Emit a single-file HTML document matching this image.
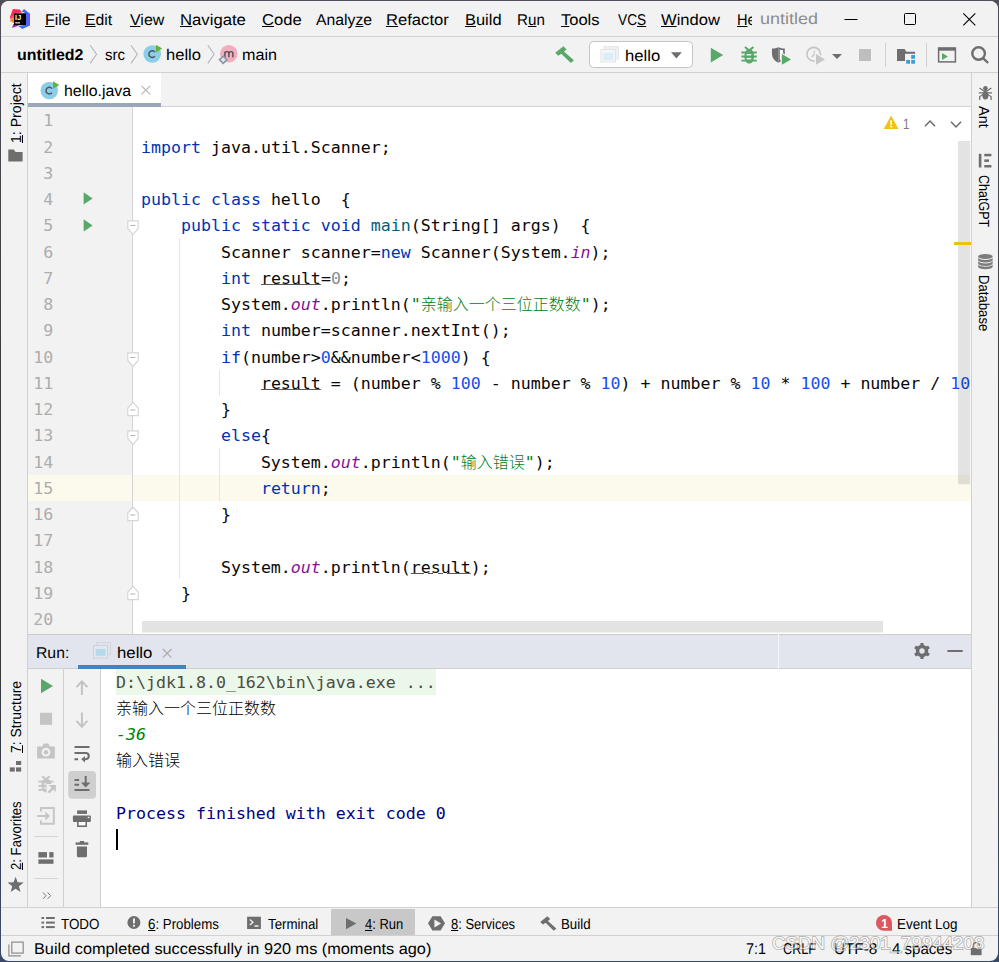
<!DOCTYPE html>
<html lang="zh">
<head>
<meta charset="utf-8">
<title>untitled2 - hello.java</title>
<style>
html,body{margin:0;padding:0;}
body{width:999px;height:962px;overflow:hidden;background:linear-gradient(#4f4e59 0,#4a4a52 12%,#38383c 45%,#38383c 70%,#3a4a66 97%);font-family:"Liberation Sans","Noto Sans CJK SC",sans-serif;color:#000;}
#win{position:absolute;left:1px;top:1px;width:997px;height:960px;border-radius:8px;overflow:hidden;background:#f2f2f2;}
#page{position:absolute;left:-1px;top:-1px;width:999px;height:962px;}
.a{position:absolute;}
.t{position:absolute;white-space:nowrap;line-height:20px;height:20px;transform-origin:0 0;text-rendering:geometricPrecision;}
.vt{transform-origin:0 0;}
.hl{position:absolute;background:#d1d1d1;height:1px;}
.vl{position:absolute;background:#d1d1d1;width:1px;}
u{text-decoration:underline;text-underline-offset:1px;text-decoration-thickness:1px;}
.code{font-family:"DejaVu Sans Mono","Liberation Mono","Noto Sans CJK SC",monospace;font-size:16.6px;white-space:pre;}
.ln{position:absolute;left:28px;width:25.3px;text-align:right;color:#adadad;height:26.25px;line-height:26.25px;}
.cl{position:absolute;left:141px;height:26.25px;line-height:26.25px;color:#080808;}
.k{color:#0033b3;}
.n{color:#1750eb;}
.s{color:#067d17;}
.f{color:#871094;font-style:italic;}
.m{color:#00627a;}
.g{color:#8c8c8c;}
.cj{font-size:16px;font-family:"Noto Sans CJK SC",sans-serif;line-height:0;font-weight:300;}
.ru{text-decoration:underline;text-underline-offset:0px;text-decoration-thickness:1px;text-decoration-color:#5a5a5a;}
.con{position:absolute;left:116px;height:26.25px;line-height:26.25px;}
svg.ov{position:absolute;left:0;top:0;pointer-events:none;}
</style>
</head>
<body>
<div id="win"><div id="page">
<div class="a" style="left:0;top:0;width:999px;height:36px;background:#f2f2f2;"></div>
<div class="t " style="left:44.69px;top:11.00px;transform:scaleX(1.0147);font-size:15.6px;"><u>F</u>ile</div>
<div class="t " style="left:85.29px;top:11.00px;transform:scaleX(1.0136);font-size:15.6px;"><u>E</u>dit</div>
<div class="t " style="left:130.00px;top:11.00px;transform:scaleX(1.0217);font-size:15.6px;"><u>V</u>iew</div>
<div class="t " style="left:180.23px;top:11.00px;transform:scaleX(1.0706);font-size:15.6px;"><u>N</u>avigate</div>
<div class="t " style="left:261.80px;top:11.00px;transform:scaleX(1.0627);font-size:15.6px;"><u>C</u>ode</div>
<div class="t " style="left:316.30px;top:11.00px;transform:scaleX(1.0109);font-size:15.6px;">Analy<u>z</u>e</div>
<div class="t " style="left:386.13px;top:11.00px;transform:scaleX(1.0651);font-size:15.6px;"><u>R</u>efactor</div>
<div class="t " style="left:465.35px;top:11.00px;transform:scaleX(1.0545);font-size:15.6px;"><u>B</u>uild</div>
<div class="t " style="left:517.23px;top:11.00px;transform:scaleX(0.9728);font-size:15.6px;">R<u>u</u>n</div>
<div class="t " style="left:561.30px;top:11.00px;transform:scaleX(1.0572);font-size:15.6px;"><u>T</u>ools</div>
<div class="t " style="left:617.60px;top:11.00px;transform:scaleX(0.8780);font-size:15.6px;">VC<u>S</u></div>
<div class="t " style="left:661.20px;top:11.00px;transform:scaleX(1.0623);font-size:15.6px;"><u>W</u>indow</div>
<div class="a" style="left:730px;top:0;width:22px;height:36px;overflow:hidden;"><div class="a" style="left:-730px;top:0;"><div class="t " style="left:736.56px;top:11.00px;transform:scaleX(0.9395);font-size:15.6px;"><u>H</u>elp</div></div></div>
<div class="t " style="left:760.38px;top:10.00px;transform:scaleX(1.1228);font-size:16px;color:#8c8c8c;">untitled</div>
<div class="hl" style="left:0;top:36px;width:999px;"></div>
<div class="t " style="left:16.60px;top:46.00px;transform:scaleX(1.0230);font-size:15.6px;font-weight:bold;">untitled2</div>
<div class="t " style="left:105.20px;top:46.00px;transform:scaleX(0.9624);font-size:15.6px;">src</div>
<div class="t " style="left:165.84px;top:46.00px;transform:scaleX(1.0628);font-size:15.6px;">hello</div>
<div class="t " style="left:241.66px;top:46.00px;transform:scaleX(1.0365);font-size:15.6px;">main</div>
<div class="t " style="left:624.63px;top:47.00px;transform:scaleX(1.0690);font-size:15.6px;z-index:6;">hello</div>
<div class="hl" style="left:0;top:72px;width:999px;"></div>
<div class="vl" style="left:27px;top:73px;height:834px;"></div>
<div class="vl" style="left:971px;top:73px;height:834px;"></div>
<div class="t vt" style="left:7.00px;top:143.47px;transform:rotate(-90deg) scaleX(0.9671);font-size:14.6px;"><u>1</u>: Project</div>
<div class="t vt" style="left:7.00px;top:752.90px;transform:rotate(-90deg) scaleX(0.9546);font-size:14.6px;"><u>7</u>: Structure</div>
<div class="t vt" style="left:7.00px;top:870.30px;transform:rotate(-90deg) scaleX(0.9007);font-size:14.6px;"><u>2</u>: Favorites</div>
<div class="t vt" style="left:993.00px;top:106.20px;transform:rotate(90deg) scaleX(0.9931);font-size:14.6px;">Ant</div>
<div class="t vt" style="left:993.00px;top:175.40px;transform:rotate(90deg) scaleX(0.8586);font-size:14.6px;">ChatGPT</div>
<div class="t vt" style="left:993.00px;top:275.20px;transform:rotate(90deg) scaleX(0.9013);font-size:14.6px;">Database</div>
<div class="a" style="left:28px;top:73px;width:133px;height:30px;background:#fff;"></div>
<div class="a" style="left:28px;top:103px;width:133px;height:4px;background:#9aa7bb;"></div>
<div class="hl" style="left:161px;top:106px;width:810px;"></div>
<div class="t " style="left:63.88px;top:82.00px;transform:scaleX(1.0182);font-size:15.6px;">hello.java</div>
<div class="a" style="left:28px;top:107px;width:943px;height:527px;background:#fff;"></div>
<div class="a" style="left:28px;top:107px;width:104px;height:527px;background:#f2f2f2;"></div>
<div class="a" style="left:28px;top:475px;width:943px;height:26px;background:#fcfaed;"></div>
<div class="vl" style="left:132px;top:107px;height:527px;background:#d4d4d4;"></div>
<div class="vl" style="left:179px;top:238.2px;height:341.2px;background:#e6e6e6;"></div>
<div class="vl" style="left:219px;top:369.5px;height:26.2px;background:#e6e6e6;"></div>
<div class="vl" style="left:219px;top:448.2px;height:52.5px;background:#e6e6e6;"></div>
<div class="a" style="left:28px;top:107px;width:943px;height:527px;overflow:hidden;"><div class="a" style="left:-28px;top:-107px;width:999px;height:962px;">
<div class="ln code" style="top:108.40px;">1</div>
<div class="ln code" style="top:134.65px;">2</div>
<div class="ln code" style="top:160.90px;">3</div>
<div class="ln code" style="top:187.15px;">4</div>
<div class="ln code" style="top:213.40px;">5</div>
<div class="ln code" style="top:239.65px;">6</div>
<div class="ln code" style="top:265.90px;">7</div>
<div class="ln code" style="top:292.15px;">8</div>
<div class="ln code" style="top:318.40px;">9</div>
<div class="ln code" style="top:344.65px;">10</div>
<div class="ln code" style="top:370.90px;">11</div>
<div class="ln code" style="top:397.15px;">12</div>
<div class="ln code" style="top:423.40px;">13</div>
<div class="ln code" style="top:449.65px;">14</div>
<div class="ln code" style="top:475.90px;">15</div>
<div class="ln code" style="top:502.15px;">16</div>
<div class="ln code" style="top:528.40px;">17</div>
<div class="ln code" style="top:554.65px;">18</div>
<div class="ln code" style="top:580.90px;">19</div>
<div class="ln code" style="top:607.15px;">20</div>
<div class="cl code" style="top:134.65px;"><span class="k">import</span> java.util.Scanner;</div>
<div class="cl code" style="top:187.15px;"><span class="k">public class</span> hello  {</div>
<div class="cl code" style="top:213.40px;">    <span class="k">public static void</span> <span class="m">main</span>(String[] args)  {</div>
<div class="cl code" style="top:239.65px;">        Scanner scanner=<span class="k">new</span> Scanner(System.<span class="f">in</span>);</div>
<div class="cl code" style="top:265.90px;">        <span class="k">int</span> <span class="ru">result</span>=<span class="g">0</span>;</div>
<div class="cl code" style="top:292.15px;">        System.<span class="f">out</span>.println(<span class="s">"<span class="cj">亲输入一个三位正数数</span>"</span>);</div>
<div class="cl code" style="top:318.40px;">        <span class="k">int</span> number=scanner.nextInt();</div>
<div class="cl code" style="top:344.65px;">        <span class="k">if</span>(number&gt;<span class="n">0</span>&amp;&amp;number&lt;<span class="n">1000</span>) {</div>
<div class="cl code" style="top:370.90px;">            <span class="ru">result</span> = (number % <span class="n">100</span> - number % <span class="n">10</span>) + number % <span class="n">10</span> * <span class="n">100</span> + number / <span class="n">10</span></div>
<div class="cl code" style="top:397.15px;">        }</div>
<div class="cl code" style="top:423.40px;">        <span class="k">else</span>{</div>
<div class="cl code" style="top:449.65px;">            System.<span class="f">out</span>.println(<span class="s">"<span class="cj">输入错误</span>"</span>);</div>
<div class="cl code" style="top:475.90px;">            <span class="k">return</span>;</div>
<div class="cl code" style="top:502.15px;">        }</div>
<div class="cl code" style="top:554.65px;">        System.<span class="f">out</span>.println(<span class="ru">result</span>);</div>
<div class="cl code" style="top:580.90px;">    }</div>
</div></div>
<div class="a" style="left:958px;top:141px;width:12.500px;height:344px;background:rgba(0,0,0,.11);border-right:1.500px solid rgba(255,255,255,.75);border-bottom:1px solid rgba(255,255,255,.6);box-sizing:border-box;"></div>
<div class="a" style="left:954px;top:242px;width:17px;height:3px;background:#e6c317;"></div>
<div class="a" style="left:141.500px;top:621.400px;width:741.500px;height:10.600px;background:#e3e3e3;"></div>
<div class="a" style="left:141.500px;top:632px;width:741.500px;height:1.300px;background:#f0f0f0;"></div>
<div class="t " style="left:902.63px;top:115.00px;transform:scaleX(0.7714);font-size:15px;color:#7a7a7a;">1</div>
<div class="hl" style="left:28px;top:634px;width:943px;background:#cccccc;"></div>
<div class="a" style="left:28px;top:635px;width:943px;height:33px;background:#e2e5ed;"></div>
<div class="hl" style="left:28px;top:668px;width:943px;background:#cfcfcf;"></div>
<div class="vl" style="left:778px;top:634px;height:35px;background:#f6f6f6;"></div>
<div class="t " style="left:35.59px;top:644.00px;transform:scaleX(1.0096);font-size:15.6px;">Run:</div>
<div class="t " style="left:116.52px;top:644.00px;transform:scaleX(1.0752);font-size:15.6px;">hello</div>
<div class="a" style="left:77.5px;top:665px;width:108.5px;height:4px;background:#4083c9;"></div>
<div class="a" style="left:101px;top:669px;width:870px;height:238px;background:#fff;"></div>
<div class="vl" style="left:63px;top:669px;height:238px;"></div>
<div class="vl" style="left:100px;top:669px;height:238px;"></div>
<div class="a" style="left:116px;top:669px;width:320px;height:26px;background:#ebf7e8;"></div>
<div class="con code" style="top:669.60px;color:#4d4d42;">D:\jdk1.8.0_162\bin\java.exe ...</div>
<div class="con code" style="top:695.85px;color:#000;"><span class="cj">亲输入一个三位正数数</span></div>
<div class="con code" style="top:722.10px;color:#007e00;font-style:italic;">-36</div>
<div class="con code" style="top:748.35px;color:#000;"><span class="cj">输入错误</span></div>
<div class="con code" style="top:800.85px;color:#00007f;">Process finished with exit code 0</div>
<div class="a" style="left:116px;top:829px;width:2px;height:21px;background:#000;"></div>
<div class="hl" style="left:0;top:907px;width:999px;"></div>
<div class="a" style="left:331px;top:909px;width:84px;height:26px;background:#c8c8c8;"></div>
<div class="t " style="left:61.40px;top:915.00px;transform:scaleX(0.9172);font-size:14.6px;">TODO</div>
<div class="t " style="left:147.80px;top:915.00px;transform:scaleX(0.9102);font-size:14.6px;"><u>6</u>: Problems</div>
<div class="t " style="left:268.00px;top:915.00px;transform:scaleX(0.9125);font-size:14.6px;">Terminal</div>
<div class="t " style="left:365.10px;top:915.00px;transform:scaleX(0.8885);font-size:14.6px;"><u>4</u>: Run</div>
<div class="t " style="left:450.50px;top:915.00px;transform:scaleX(0.8875);font-size:14.6px;"><u>8</u>: Services</div>
<div class="t " style="left:560.89px;top:915.00px;transform:scaleX(0.9095);font-size:14.6px;">Build</div>
<div class="t " style="left:896.88px;top:915.00px;transform:scaleX(0.9210);font-size:14.6px;">Event Log</div>
<div class="hl" style="left:0;top:935px;width:999px;"></div>
<div class="t " style="left:34.46px;top:940.00px;transform:scaleX(1.0443);font-size:15.6px;">Build completed successfully in 920 ms (moments ago)</div>
<div class="t " style="left:745.80px;top:940.00px;transform:scaleX(0.9236);font-size:15.6px;">7:1</div>
<div class="t " style="left:782.50px;top:940.00px;transform:scaleX(0.8110);font-size:15.6px;">CRLF</div>
<div class="t " style="left:833.92px;top:940.00px;transform:scaleX(0.9787);font-size:15.6px;">UTF-8</div>
<div class="t " style="left:891.80px;top:940.00px;transform:scaleX(0.9646);font-size:15.6px;">4 spaces</div>
<svg class="ov" style="z-index:5" width="999" height="962" viewBox="0 0 999 962">
<polygon points="12.9,9 19.800,9.400 22.200,12.600 14.200,13.500 14.200,18 10,17" fill="#fe2857"/>
<polygon points="10,16.800 14.200,15 14.200,18.200 10,19" fill="#fd4a6c"/>
<polygon points="10,20 13.9,17.8 13.9,23 10.4,21.2" fill="#fc801d"/>
<polygon points="12,28 13.4,24 19,25.4" fill="#a21dc9"/>
<polygon points="24,9 30,13.8 30,25.4 22.4,29 18.2,26 25,25 25,13 21.8,11.4" fill="#3b6ff0"/>
<polygon points="26,14 30,13.8 30,25.4 26,25" fill="#6b57ff" opacity=".6"/>
<rect x="14" y="13.3" width="12" height="11.8" fill="#000"/>
<text x="15" y="19.800" font-family="Liberation Sans, sans-serif" font-weight="bold" font-size="7.2" fill="#fff" letter-spacing="0.2">IJ</text>
<rect x="15.2" y="22.3" width="4.8" height="1.1" fill="#fff"/>
<path d="M844.5 19.5h13" stroke="#000" stroke-width="1" fill="none"/>
<rect x="904.5" y="13.5" width="11" height="11" rx="1" fill="none" stroke="#000" stroke-width="1"/>
<path d="M963.3 13.3l12 12M975.3 13.3l-12 12" stroke="#000" stroke-width="1.1" fill="none"/>
<path d="M90.2 45.2l6.3 9.1-6.3 9.1" stroke="#b0b5bc" stroke-width="1.1" fill="none"/><path d="M131.0 45.2l6.3 9.1-6.3 9.1" stroke="#b0b5bc" stroke-width="1.1" fill="none"/><path d="M207.8 45.2l6.3 9.1-6.3 9.1" stroke="#b0b5bc" stroke-width="1.1" fill="none"/><circle cx="152.2" cy="54.0" r="8.8" fill="#8ccde7"/><path d="M154.80 52.10a3.3 3.3 0 1 0 0 4.1" stroke="#4a5560" stroke-width="1.5" fill="none"/><polygon points="155.9,44.7 162.2,48.5 155.9,52.4" fill="#5fb53a"/>
<circle cx="228.8" cy="53.7" r="8.8" fill="#f5adbd"/>
<path d="M224.9 57.3v-5.6M224.9 53.6a2 2 0 0 1 4 0v3.7M228.9 53.6a2 2 0 0 1 4 0v3.7" stroke="#4a4a55" stroke-width="1.4" fill="none"/>
<rect x="-2.6" y="-2.6" width="5.2" height="5.2" transform="translate(223.2 59.8) rotate(45)" fill="#dfe4e8" stroke="#8696a5" stroke-width="1.6"/>
<polygon points="555.2,52.7 563.5,46.2 566.6,49.4 563.9,51.6 573.9,60.3 570.9,63 561.2,53.7 558.2,55.8" fill="#59a869"/>
<rect x="589.5" y="41.5" width="103" height="26" rx="4" fill="#fff" stroke="#c4c4c4"/>
<rect x="604" y="46.5" width="14.5" height="12.5" fill="#eef0f2" stroke="#e6e8ea" stroke-width="1"/>
<rect x="601" y="49.5" width="14.5" height="12.5" fill="#f4f5f6" stroke="#e2e4e6" stroke-width="1"/>
<rect x="603.3" y="53" width="10.2" height="7" fill="#d8edf8"/>
<polygon points="671,52.3 681.8,52.3 676.4,58.4" fill="#6e6e6e"/>
<polygon points="710.8,47.8 723.2,55.1 710.8,62.4" fill="#59a869"/>
<g fill="none" stroke="#59a869"><path stroke-width="1.9" d="M741.4 52.5h15.4M741.4 56.5h15.4M741.4 60.6h15.4"/><path stroke-width="2" d="M745 47l3 2.600M753.400 47l-3 2.600"/></g>
<ellipse cx="749.200" cy="56.200" rx="4.900" ry="7.400" fill="#59a869"/>
<rect x="746.600" y="54" width="4.600" height="1.500" fill="#f2f2f2"/><rect x="746.600" y="57.900" width="4.600" height="1.500" fill="#f2f2f2"/>
<path d="M772 48.500c2.500 0 4.600-.4 6.500-1.300v15.500c-3.800-1.500-6.500-4.800-6.500-9z" fill="#6e6e6e"/>
<path d="M778.500 47.200c1.900 .900 4 1.300 6.300 1.300v5.200c0 4.200-2.500 7.500-6.300 9z" fill="#6e6e6e"/>
<path d="M779.800 49.600c1 .300 2.100 .500 3.300 .600v3.600c0 2.900-1.200 5.200-3.300 6.700z" fill="#fff"/>
<polygon points="780.700,52 793.500,59.400 780.700,66.800" fill="#f2f2f2"/>
<polygon points="781.9,54.0 791.0,59.4 781.9,64.8" fill="#59a869"/>
<circle cx="813.700" cy="54.200" r="6.800" fill="none" stroke="#c4c4c4" stroke-width="1.600"/>
<path d="M814.400 50.800l-.3 4-2.500 2.100" stroke="#c4c4c4" stroke-width="1.300" fill="none"/>
<polygon points="814.800,52 827,59.300 814.800,66.600" fill="#f2f2f2"/>
<polygon points="816.0,54.0 825.0,59.4 816.0,64.8" fill="#c6c6c6"/>
<polygon points="832,54 842,54 837,59" fill="#6e6e6e"/>
<rect x="859" y="49" width="12" height="12" fill="#bebebe"/>
<rect x="885" y="43" width="1" height="24" fill="#d0d0d0"/>
<rect x="926" y="43" width="1" height="24" fill="#d0d0d0"/>
<path d="M897 49h7.600l1.800 2.700h8.700v9.300h-18.100z" fill="#6e6e6e"/>
<rect x="905" y="53.800" width="11" height="11" fill="#f2f2f2"/>
<rect x="911.200" y="55" width="3.800" height="3.800" fill="#389fd6"/>
<rect x="906.200" y="60" width="3.800" height="3.700" fill="#389fd6"/>
<rect x="911.200" y="60" width="3.800" height="3.700" fill="#389fd6"/>
<rect x="938.600" y="48.100" width="16.800" height="13.800" fill="none" stroke="#6e6e6e" stroke-width="1.500"/>
<rect x="938" y="47.500" width="18" height="3.200" fill="#6e6e6e"/>
<polygon points="942.0,52.9 948.0,56.5 942.0,60.1" fill="#59a869"/>
<circle cx="978.600" cy="53.500" r="6.300" fill="none" stroke="#6e6e6e" stroke-width="2.400"/>
<path d="M983.200 58.300l5 4.700" stroke="#6e6e6e" stroke-width="2.400" fill="none"/>
<circle cx="49.3" cy="90.5" r="8.8" fill="#8ccde7"/><path d="M51.90 88.60a3.3 3.3 0 1 0 0 4.1" stroke="#4a5560" stroke-width="1.5" fill="none"/><polygon points="53.0,81.2 59.3,85.0 53.0,88.9" fill="#5fb53a"/><path d="M141.500 85.800l8.800 8.600M150.300 85.800l-8.800 8.600" stroke="#b4b4b4" stroke-width="1.100" fill="none"/>
<path d="M8.300 149.500h5.600l1.700 2.400h7v9.600h-14.300z" fill="#6e6e6e"/>
<rect x="16" y="761" width="5.200" height="4" fill="#6e6e6e"/><rect x="9.800" y="767.400" width="5" height="4.200" fill="#6e6e6e"/><rect x="16" y="767.400" width="5.200" height="4.200" fill="#6e6e6e"/>
<polygon points="15.60,876.70 17.66,882.37 23.68,882.57 18.93,886.28 20.60,892.08 15.60,888.70 10.60,892.08 12.27,886.28 7.52,882.57 13.54,882.37" fill="#6e6e6e"/>
<circle cx="985.4" cy="88.300" r="2.300" fill="#6e6e6e"/><ellipse cx="985.4" cy="95.400" rx="3" ry="4" fill="#6e6e6e"/>
<rect x="984.2" y="89.5" width="2.4" height="3" fill="#6e6e6e"/>
<g stroke="#6e6e6e" stroke-width="1.200" fill="none"><path d="M984.500 91.500l-5-3.500M986.300 91.500l5-3.500M984 92.800h-5.200M986.800 92.800h5.200M984.300 94l-4.600 2.500v3.500M986.500 94l4.600 2.500v3.500"/></g>
<rect x="978.800" y="153.800" width="2.600" height="13.700" fill="#6e6e6e"/><rect x="984.300" y="153.800" width="7.100" height="2.500" fill="#6e6e6e"/><rect x="984.300" y="159.400" width="4.700" height="2.500" fill="#6e6e6e"/><rect x="984.300" y="165" width="7.100" height="2.500" fill="#6e6e6e"/>
<g fill="#7c7c7c"><ellipse cx="985.400" cy="256.500" rx="7.300" ry="2.600"/><path d="M978.100 257.45a7.300 2.600 0 0 0 14.600 0v2.45a7.300 2.600 0 0 1-14.600 0z"/><path d="M978.100 260.85a7.300 2.600 0 0 0 14.600 0v2.45a7.300 2.600 0 0 1-14.600 0z"/><path d="M978.100 264.25a7.300 2.600 0 0 0 14.600 0v2.45a7.300 2.600 0 0 1-14.600 0z"/></g>
<polygon points="83.6,192.3 92.6,198.5 83.6,204.6" fill="#59a869"/>
<polygon points="83.6,219.3 92.6,225.5 83.6,231.6" fill="#59a869"/>
<path d="M127.8 220.8h10.4v7.6l-5.2 5.9-5.2-5.9z" fill="#fff" stroke="#d6d6d6" stroke-width="1.2"/><path d="M130.300 225.5h5" stroke="#b4b4b4" stroke-width="1"/>
<path d="M127.8 352.8h10.4v7.6l-5.2 5.9-5.2-5.9z" fill="#fff" stroke="#d6d6d6" stroke-width="1.2"/><path d="M130.300 357.5h5" stroke="#b4b4b4" stroke-width="1"/>
<path d="M127.8 430.8h10.4v7.6l-5.2 5.9-5.2-5.9z" fill="#fff" stroke="#d6d6d6" stroke-width="1.2"/><path d="M130.300 435.5h5" stroke="#b4b4b4" stroke-width="1"/>
<path d="M127.8 415.6h10.4v-7.600l-5.200-5.900-5.200 5.900z" fill="#fff" stroke="#d6d6d6" stroke-width="1.2"/><path d="M130.300 410.0h5" stroke="#b4b4b4" stroke-width="1"/>
<path d="M127.8 520.6h10.4v-7.600l-5.200-5.900-5.200 5.900z" fill="#fff" stroke="#d6d6d6" stroke-width="1.2"/><path d="M130.300 515.0h5" stroke="#b4b4b4" stroke-width="1"/>
<path d="M127.8 599.6h10.4v-7.600l-5.200-5.900-5.200 5.900z" fill="#fff" stroke="#d6d6d6" stroke-width="1.2"/><path d="M130.300 594.0h5" stroke="#b4b4b4" stroke-width="1"/>
<path d="M891.100 115.500l7.400 13.600h-14.800z" fill="#eec311"/><rect x="890.300" y="120.300" width="1.700" height="4.400" fill="#fff"/><rect x="890.300" y="125.700" width="1.700" height="1.700" fill="#fff"/>
<path d="M925 126.300l5-5.200 5 5.200" stroke="#6a6a6a" stroke-width="1.500" fill="none"/>
<path d="M951 121.800l5 5.200 5-5.200" stroke="#6a6a6a" stroke-width="1.500" fill="none"/>
<rect x="96.500" y="642.500" width="14" height="12" fill="#dfe3ea" stroke="#d3d7de" stroke-width="1"/>
<rect x="93.500" y="645.500" width="14" height="12.500" fill="#e3e7ee" stroke="#cdd1d8" stroke-width="1"/>
<rect x="95.700" y="649" width="9.800" height="6.800" fill="#b5d9ec"/>
<path d="M162.800 649l8.700 8.600M171.500 649l-8.700 8.600" stroke="#a8a8a8" stroke-width="1.100" fill="none"/>
<g fill="#6e6e6e"><rect x="920.400" y="642.900" width="3.200" height="16.200" rx=".6" transform="rotate(0 922 651)"/><rect x="920.400" y="642.900" width="3.200" height="16.200" rx=".6" transform="rotate(60 922 651)"/><rect x="920.400" y="642.900" width="3.200" height="16.200" rx=".6" transform="rotate(120 922 651)"/><circle cx="922" cy="651" r="6.200"/></g><circle cx="922" cy="651" r="2.700" fill="#e2e5ed"/>
<rect x="947.400" y="650" width="15.300" height="2" fill="#6e6e6e"/>
<polygon points="41.0,678.8 53.0,686.0 41.0,693.2" fill="#59a869"/>
<rect x="40" y="712.800" width="12.100" height="12" fill="#c4c4c4"/>
<path d="M37.100 746.400h5.200l1.200-3h5l1.200 3h5.100v12h-17.700z" fill="#c4c4c4"/><circle cx="46" cy="752.200" r="4.400" fill="#f2f2f2"/><circle cx="46" cy="752.200" r="2.200" fill="#c4c4c4"/>
<g stroke="#c4c4c4" fill="none"><path stroke-width="2" d="M42 776.300l3.400 2.500M49.700 776.300l-3.400 2.500"/><path stroke-width="1.800" d="M38.400 781.700h5M38.400 785.800h5M38.400 789.900h5M48 781.700h5.400"/><path stroke-width="2.400" d="M53 788l-4.400 4.600"/></g>
<path d="M41.600 783.500a4.800 4.800 0 0 1 9.600 0v.6h-4.700v8.600c-2.900-.300-4.900-2.600-4.900-5.400z" fill="#c4c4c4"/>
<rect x="43.600" y="783.300" width="2.900" height="1.300" fill="#f2f2f2"/><rect x="43.600" y="787.300" width="2.500" height="1.300" fill="#f2f2f2"/>
<polygon points="48.800,785.100 55.800,785.100 55.800,792.100" fill="#c4c4c4"/>
<path d="M41 811.500v-3.400h12.800v15.700h-12.800v-3.400" stroke="#c6c6c6" stroke-width="2" fill="none"/><path d="M37.100 816h10" stroke="#c6c6c6" stroke-width="2" fill="none"/><path d="M45.400 811.600l4.600 4.400-4.600 4.400z" fill="#c6c6c6"/>
<rect x="34" y="836" width="24" height="1" fill="#d4d4d4"/><rect x="34" y="878" width="24" height="1" fill="#d4d4d4"/>
<rect x="38.400" y="852.100" width="8.600" height="5.400" fill="#6e6e6e"/><rect x="49.300" y="852.100" width="4.200" height="5.400" fill="#6e6e6e"/><rect x="38.400" y="859.400" width="15.100" height="4.400" fill="#6e6e6e"/>
<path d="M43 892.500l3 3.200-3 3.200M47.600 892.500l3 3.200-3 3.200" stroke="#7a7a7a" stroke-width="1" fill="none"/>
<path d="M81.900 695v-13.500M76.400 687.200l5.500-5.900 5.500 5.900" stroke="#c2c2c2" stroke-width="1.900" fill="none"/>
<path d="M81.900 712.600v13.500M76.400 720.900l5.500 5.900 5.500-5.900" stroke="#c2c2c2" stroke-width="1.900" fill="none"/>
<path d="M74.500 747h15M74.500 753h11.200a3.100 3.100 0 0 1 0 6.200h-2.500M74.500 759.200h3.600" stroke="#6e6e6e" stroke-width="2" fill="none"/><path d="M85 756l-3.800 3.200 3.800 3.200z" fill="#6e6e6e"/>
<rect x="68.200" y="771" width="27.800" height="27.800" rx="4" fill="#cfcfcf"/>
<path d="M74.500 780h4.600M74.500 784.800h4.600M74.500 790h15" stroke="#6e6e6e" stroke-width="2" fill="none"/><path d="M85.700 775.900v7" stroke="#6e6e6e" stroke-width="2" fill="none"/><path d="M81 782.600h9.400l-4.700 4.800z" fill="#6e6e6e"/>
<rect x="77.100" y="810.400" width="9.900" height="3.500" fill="#6e6e6e"/><rect x="72.900" y="815.600" width="18" height="6.400" rx="1" fill="#6e6e6e"/><rect x="77.900" y="821.200" width="8.300" height="5" fill="#fff" stroke="#6e6e6e" stroke-width="1.600"/><rect x="87.700" y="816.800" width="1.800" height="1.300" fill="#f2f2f2"/>
<rect x="75.600" y="842.400" width="12.700" height="2.400" fill="#6e6e6e"/><rect x="79.800" y="841" width="4.300" height="2" fill="#6e6e6e"/><path d="M76.900 846.400h10.100v9.400a1.500 1.500 0 0 1-1.500 1.500h-7.100a1.500 1.500 0 0 1-1.500-1.500z" fill="#6e6e6e"/>
<rect x="41.500" y="917.0" width="2.600" height="2" fill="#6e6e6e"/><rect x="46" y="917.0" width="8.800" height="2" fill="#6e6e6e"/>
<rect x="41.500" y="921.6" width="2.600" height="2" fill="#6e6e6e"/><rect x="46" y="921.6" width="8.800" height="2" fill="#6e6e6e"/>
<rect x="41.500" y="926.1" width="2.600" height="2" fill="#6e6e6e"/><rect x="46" y="926.1" width="8.800" height="2" fill="#6e6e6e"/>
<circle cx="133.900" cy="922.500" r="6.500" fill="#6e6e6e"/><rect x="133" y="918.400" width="1.900" height="5" fill="#f2f2f2"/><rect x="133" y="924.800" width="1.900" height="1.900" fill="#f2f2f2"/>
<rect x="247.100" y="916.700" width="13.800" height="12.300" fill="#6e6e6e"/><path d="M249.800 919.600l3.200 2.700-3.200 2.700M254.500 926h4" stroke="#f2f2f2" stroke-width="1.300" fill="none"/>
<polygon points="346.0,918.0 356.4,923.6 346.0,929.3" fill="#6e6e6e"/>
<polygon points="428,923.300 432.400,916.200 440.600,916.200 445,923.300 440.600,930.500 432.400,930.500" fill="#6e6e6e"/>
<polygon points="434.4,919.4 441.1,923.4 434.4,927.4" fill="#f2f2f2"/>
<polygon points="540.200,922 547.400,916.200 550.200,919 547.900,920.900 556.300,928.400 553.800,930.800 545.600,922.700 543,924.600" fill="#6e6e6e"/>
<path d="M884 915a8 8 0 0 1 8 8v7.800h-8a8 7.900 0 0 1 0-15.800z" fill="#db5860"/>
<text x="881.300" y="928.200" font-family="Liberation Sans, sans-serif" font-size="12" font-weight="bold" fill="#fff">1</text>
<path d="M8.900 944.500v11.300h12" stroke="#8c8c8c" stroke-width="1.200" fill="none"/><rect x="11.800" y="942.100" width="11.400" height="11" fill="none" stroke="#8c8c8c" stroke-width="1.200"/>
<rect x="970.800" y="948" width="10.800" height="7.200" fill="#6e6e6e"/><path d="M973 948v-2.200a3.200 3.200 0 0 1 6.400 0" stroke="#6e6e6e" stroke-width="1.400" fill="none"/>
</svg>
<div class="t " style="left:771.80px;top:933.40px;transform:scaleX(1.0682);font-size:17.5px;color:#fff;-webkit-text-stroke:1.4px #6f6f6f;paint-order:stroke fill;opacity:.55;z-index:9;">CSDN @2301_79944208</div>
</div></div>
</body>
</html>
